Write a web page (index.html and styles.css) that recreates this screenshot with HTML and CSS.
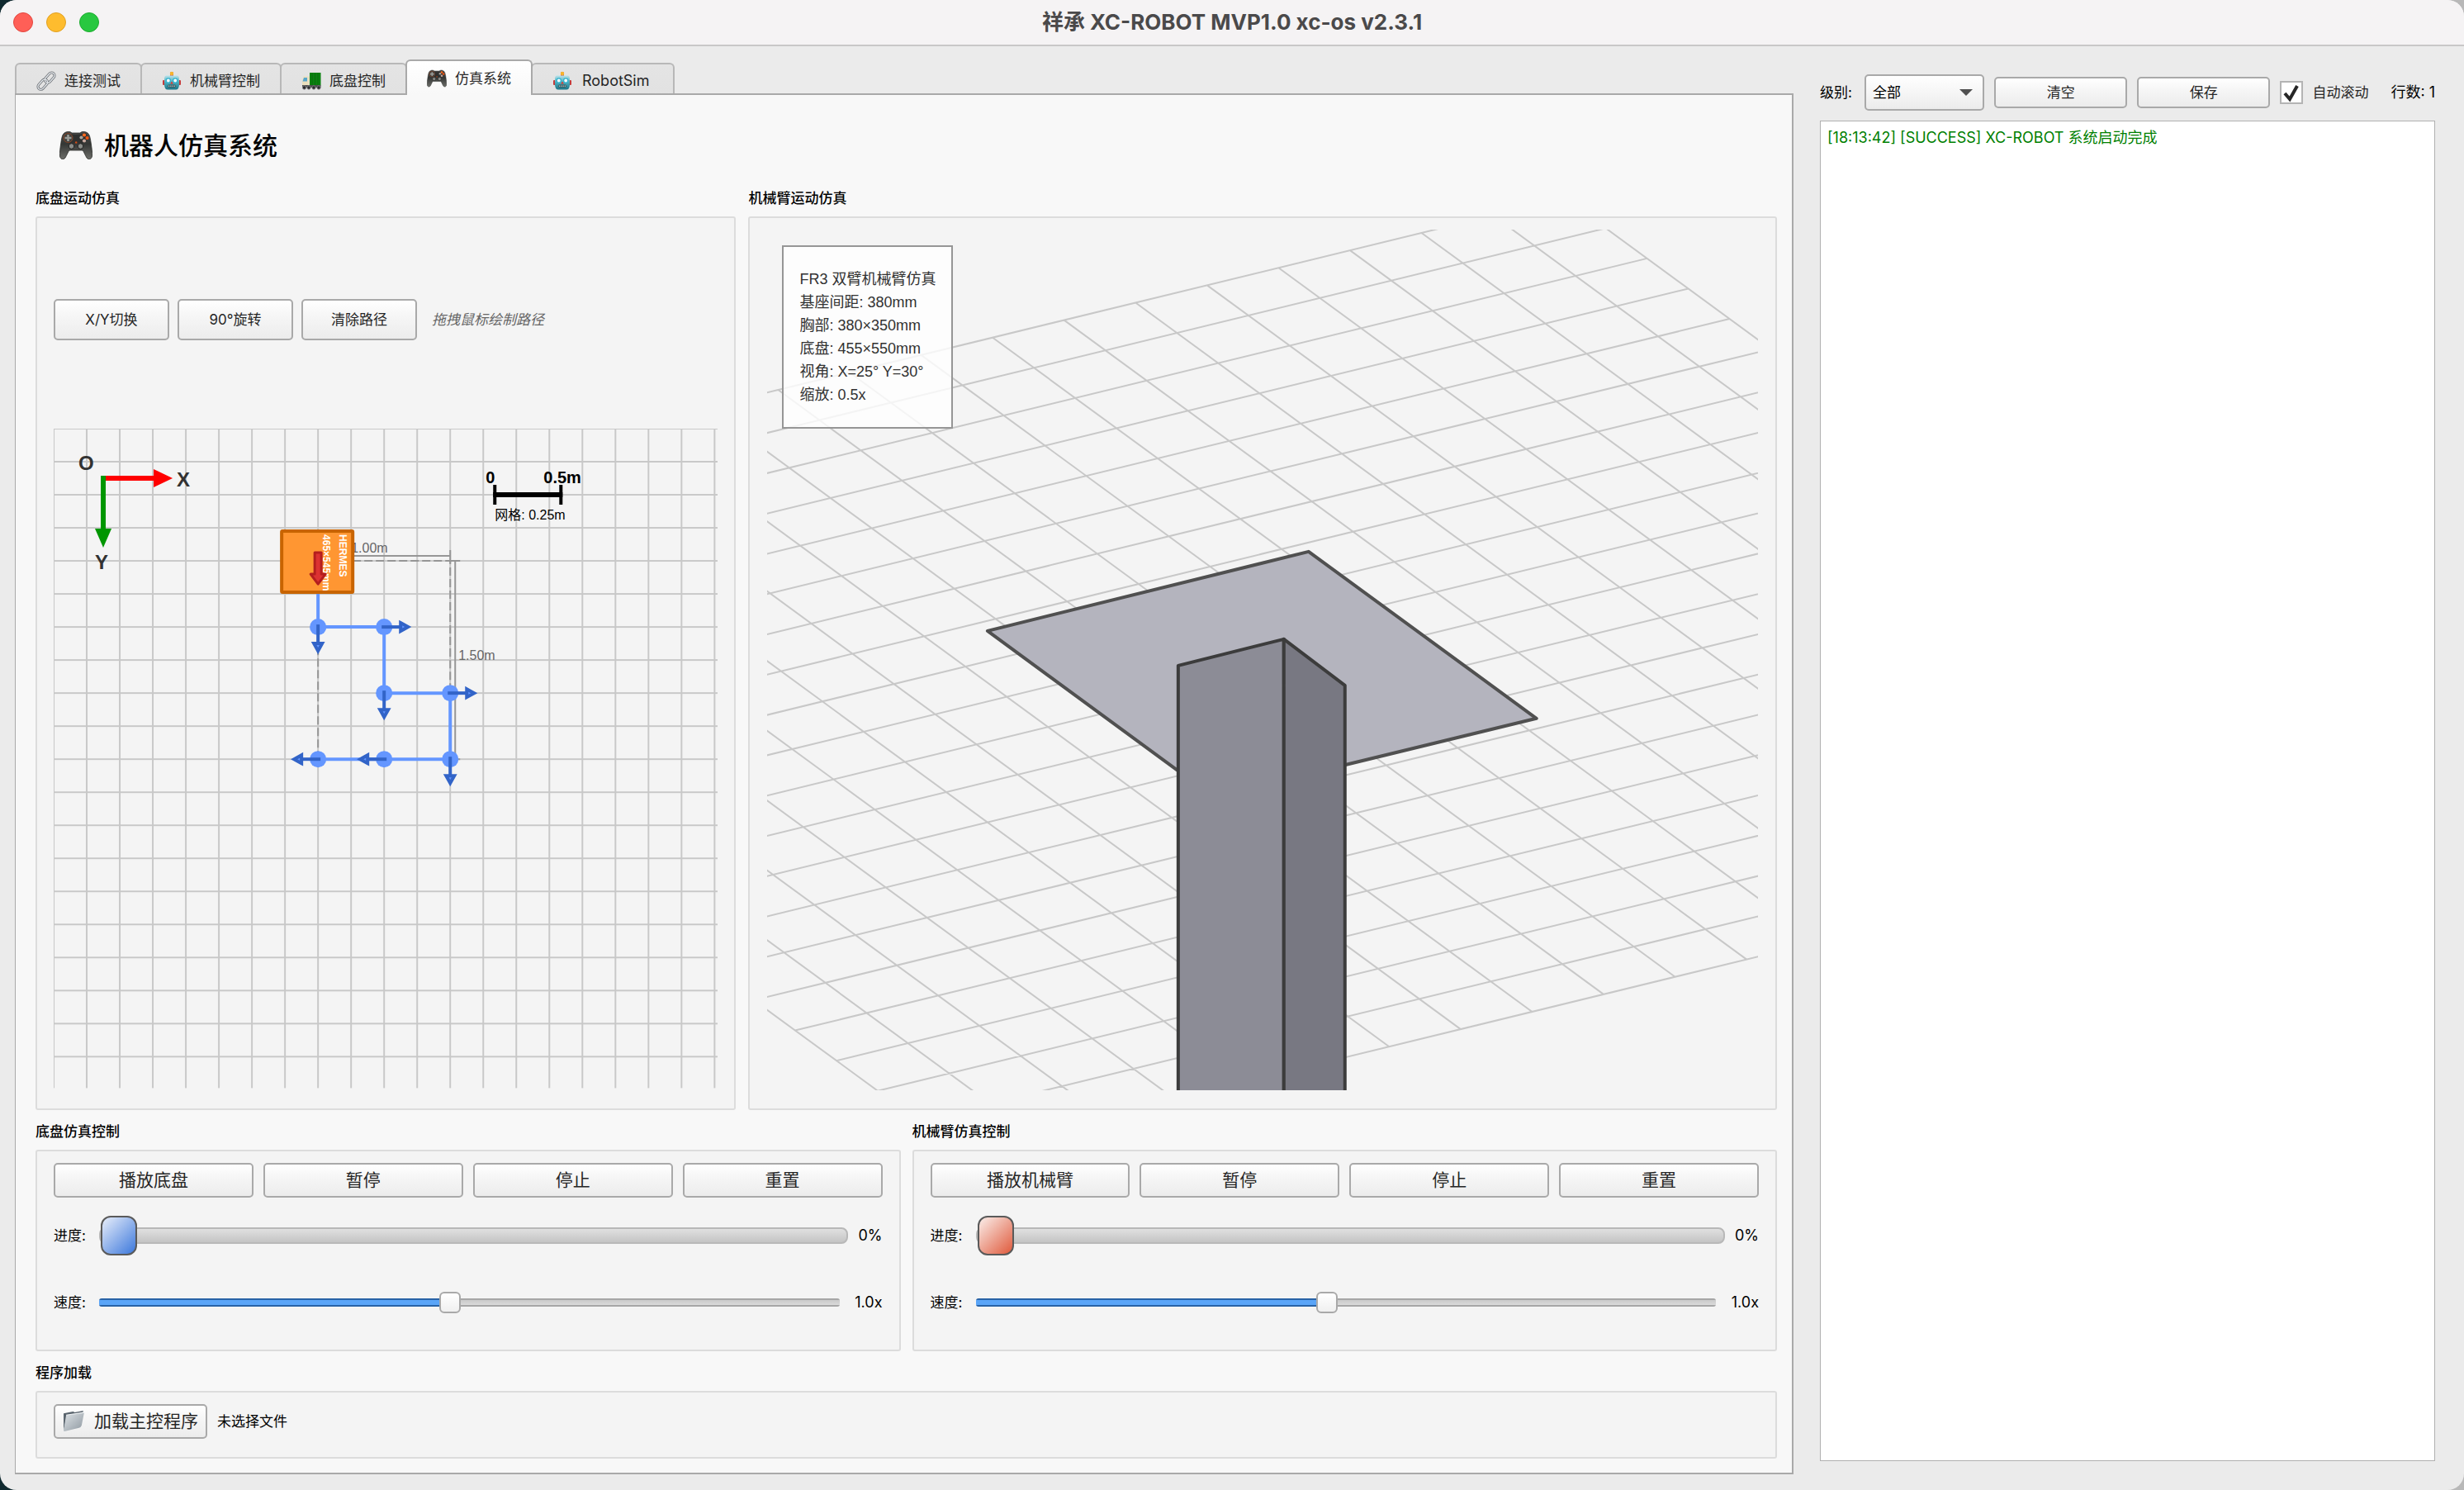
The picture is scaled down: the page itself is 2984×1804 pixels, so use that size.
FILE: index.html
```html
<!DOCTYPE html>
<html lang="zh-CN">
<head>
<meta charset="utf-8">
<title>祥承 XC-ROBOT MVP1.0 xc-os v2.3.1</title>
<link rel="stylesheet" href="styles.css">
</head>
<body>
<svg class="defs" aria-hidden="true">
  <defs>
    <linearGradient id="pad-body" x1="0" y1="0" x2="0" y2="1"><stop offset="0" stop-color="#4a4a48"/><stop offset=".45" stop-color="#353735"/><stop offset="1" stop-color="#6d6e6a"/></linearGradient>
    <linearGradient id="bot-face" x1="0" y1="0" x2="0" y2="1"><stop offset="0" stop-color="#b9e2ea"/><stop offset=".45" stop-color="#4fb0c0"/><stop offset="1" stop-color="#1b7486"/></linearGradient>
    <linearGradient id="folder-front" x1="0" y1="0" x2="1" y2="1"><stop offset="0" stop-color="#dfe4e8"/><stop offset="1" stop-color="#8d979f"/></linearGradient>
    <symbol id="icon-gamepad" viewBox="0 0 40 34">
      <path d="M8 1C10 0 13 0 15 2H25C27 0 30 0 32 1C36 2 37 6 38 13C39 20 40 26 39.500 30C39 34 35 35 33 32C31 29 30 25 28 23H12C10 25 9 29 7 32C5 35 1 34 .5 30C0 26 1 20 2 13C3 6 4 2 8 1Z" fill="url(#pad-body)" stroke="#2b2c2a" stroke-width=".8"/>
      <path d="M8 2Q20 6 32 2L35 8Q30 16 25 14H15Q10 16 5 8Z" fill="#2f302f"/>
      <circle cx="10.500" cy="8" r="5.500" fill="#3e403e" stroke="#8a4527" stroke-width="1"/>
      <path d="M10.500 4V12M6.500 8H14.500" stroke="#9a9c98" stroke-width="2.600"/>
      <circle cx="30" cy="4.500" r="2.100" fill="#ff6a1f"/><circle cx="33.500" cy="8" r="2.100" fill="#f2530f"/><circle cx="26.500" cy="7.500" r="2.100" fill="#a9a49d"/><circle cx="30" cy="11.500" r="2.100" fill="#c9aaa0"/>
      <circle cx="20.200" cy="13.500" r="1.200" fill="#d34c17"/>
      <circle cx="14.500" cy="18" r="3.300" fill="#8b8d89" stroke="#222" stroke-width="1"/><circle cx="25.500" cy="18" r="3.300" fill="#8b8d89" stroke="#222" stroke-width="1"/>
    </symbol>
    <symbol id="icon-robot" viewBox="0 0 24 24">
      <rect x="10" y="1.500" width="4" height="5" fill="#c9583f"/><circle cx="12" cy="3" r="2.200" fill="#f7b52c"/>
      <rect x="1" y="11" width="3" height="6" rx="1" fill="#c43c3c"/><rect x="20" y="11" width="3" height="6" rx="1" fill="#c43c3c"/>
      <path d="M5 5.500H19Q21 6 21 9V17Q20.500 22.500 17 22.500H7Q3.500 22.500 3 17V9Q3 6 5 5.500Z" fill="url(#bot-face)"/>
      <circle cx="7.800" cy="11.500" r="2.600" fill="#fff" stroke="#35b4d0" stroke-width="1.400"/><circle cx="16.200" cy="11.500" r="2.600" fill="#fff" stroke="#35b4d0" stroke-width="1.400"/>
      <path d="M12 12.500L13.800 15.500H10.200Z" fill="#e0372c"/>
      <rect x="7.500" y="17" width="9" height="2.600" rx=".6" fill="#a8b4b4" stroke="#23505a" stroke-width=".8"/><path d="M9.700 17V19.500M12 17V19.500M14.300 17V19.500" stroke="#23505a" stroke-width=".8"/>
    </symbol>
    <symbol id="icon-link" viewBox="0 0 24 24">
      <g fill="none">
        <g stroke="#6c7075" stroke-width="3"><rect x="-3.500" y="-7" width="7" height="14" rx="3.500" transform="translate(16.200 8) rotate(42)"/><rect x="-3.500" y="-7" width="7" height="14" rx="3.500" transform="translate(7.800 16.200) rotate(42)"/></g>
        <g stroke="#e2e6ea" stroke-width="1.400"><rect x="-3.500" y="-7" width="7" height="14" rx="3.500" transform="translate(16.200 8) rotate(42)"/><rect x="-3.500" y="-7" width="7" height="14" rx="3.500" transform="translate(7.800 16.200) rotate(42)"/></g>
      </g>
    </symbol>
    <symbol id="icon-truck" viewBox="0 0 24 24">
      <rect x="10" y="2" width="13.500" height="15.500" fill="#0a8210"/><path d="M13 2.500V17M16.500 2.500V17M20 2.500V17" stroke="#0b650f" stroke-width=".8"/>
      <path d="M2.500 6.500H9.500V18H1V12.500Z" fill="#eadfbd"/><path d="M3 8H7V12.500H1.500Z" fill="#58a6cc"/>
      <rect x="1" y="17" width="22.500" height="3" fill="#4c4d4f"/>
      <g fill="#2c2d2f" stroke="#8b8c8f" stroke-width=".8"><circle cx="3.500" cy="20" r="2.200"/><circle cx="9" cy="20" r="2.200"/><circle cx="15" cy="20" r="2.200"/><circle cx="21" cy="20" r="2.200"/></g>
    </symbol>
    <symbol id="icon-folder" viewBox="0 0 26 26">
      <path d="M1 4L12 2L14 3L24 1L22 7L4 10L1 24Z" fill="#59646d"/>
      <path d="M4 6L25 3L22 18Q21 20.500 19 21L2 25Q1 25 1 24Z" fill="url(#folder-front)"/>
      <path d="M4 6L25 3" stroke="#edf0f2" stroke-width="1"/>
    </symbol>
  </defs>
</svg>

<div class="window">
  <header class="titlebar">
    <div class="lights"><span class="light close"></span><span class="light minimize"></span><span class="light zoom"></span></div>
    <div class="window-title">祥承 XC-ROBOT MVP1.0 xc-os v2.3.1</div>
  </header>

  <div class="workspace">
    <main class="main">
      <div class="tabs" role="tablist">
        <button class="tab" role="tab"><svg class="tab-icon"><use href="#icon-link"/></svg>连接测试</button>
        <button class="tab" role="tab"><svg class="tab-icon"><use href="#icon-robot"/></svg>机械臂控制</button>
        <button class="tab" role="tab"><svg class="tab-icon"><use href="#icon-truck"/></svg>底盘控制</button>
        <button class="tab tab-active" role="tab" aria-selected="true"><svg class="tab-icon"><use href="#icon-gamepad"/></svg>仿真系统</button>
        <button class="tab" role="tab"><svg class="tab-icon"><use href="#icon-robot"/></svg><span class="latin">RobotSim</span></button>
      </div>

      <div class="page" role="tabpanel">
        <h1 class="page-title"><svg class="title-icon"><use href="#icon-gamepad"/></svg>机器人仿真系统</h1>

        <div class="views">
          <section class="group">
            <h2 class="group-title">底盘运动仿真</h2>
            <div class="box view-box">
              <div class="path-tools">
                <button class="button path-button">X/Y切换</button>
                <button class="button path-button">90°旋转</button>
                <button class="button path-button">清除路径</button>
                <span class="hint">拖拽鼠标绘制路径</span>
              </div>
              <svg class="canvas" viewBox="0 0 804 800">
                <defs>
                  <pattern id="floor" width="40" height="40" patternUnits="userSpaceOnUse"><path d="M0 0H40V40H0Z" fill="none" stroke="#c8c8c8" stroke-width="2"/></pattern>
                  <g id="waypoint"><circle r="10" fill="#6496ff"/><path d="M-3 0H22" stroke="#3264c8" stroke-width="4"/><path d="M20-5L29 0L20 5Z" fill="#6496ff" stroke="#3264c8" stroke-width="4"/></g>
                </defs>
                <rect width="804" height="798" fill="url(#floor)"/>
                <g fill="none" stroke="#969696" stroke-width="2">
                  <path d="M320 160H480V400H320Z" stroke-dasharray="10 4"/>
                  <path d="M320 154H480M480 147V162M486 160V400M480 160H492M480 400H492"/>
                </g>
                <g class="measure"><text x="360" y="150">1.00m</text><text x="490" y="280">1.50m</text></g>
                <path d="M60 60H124" stroke="#f00" stroke-width="6"/><path d="M121 49L144 60L121 71Z" fill="#f00"/>
                <path d="M60 57V124" stroke="#009600" stroke-width="6"/><path d="M50 121L60 144L70 121Z" fill="#009600"/>
                <g class="axis"><text x="30" y="50">O</text><text x="149" y="70">X</text><text x="50" y="170">Y</text></g>
                <path d="M532 80H616" stroke="#000" stroke-width="6"/><path d="M534 68V92M614 68V92" stroke="#000" stroke-width="4"/>
                <g class="scale"><text x="523" y="66">0</text><text x="593" y="66">0.5m</text></g>
                <text class="scale-note" x="534" y="110">网格: 0.25m</text>
                <path d="M320 160V240H400V320H480V400H320" fill="none" stroke="#6496ff" stroke-width="4"/>
                <use href="#waypoint" transform="translate(320 240) rotate(90)"/>
                <use href="#waypoint" transform="translate(400 240)"/>
                <use href="#waypoint" transform="translate(400 320) rotate(90)"/>
                <use href="#waypoint" transform="translate(480 320)"/>
                <use href="#waypoint" transform="translate(480 400) rotate(90)"/>
                <use href="#waypoint" transform="translate(400 400) rotate(180)"/>
                <use href="#waypoint" transform="translate(320 400) rotate(180)"/>
                <rect x="276" y="124" width="86" height="74" rx="1" fill="#ff9632" stroke="#c86400" stroke-width="4"/>
                <g class="robot-text"><text transform="translate(346 128) rotate(90)">HERMES</text><text transform="translate(326 128) rotate(90)">465×545mm</text></g>
                <path d="M316 150H324V176H329L320 188L311 176H316Z" fill="#dc3232" stroke="#b41e1e" stroke-width="3" stroke-linejoin="round"/>
              </svg>
            </div>
          </section>

          <section class="group">
            <h2 class="group-title">机械臂运动仿真</h2>
            <div class="box view-box scene-box">
              <div class="scene">
                <svg class="canvas" viewBox="0 0 1200 1042">
                  <g transform="matrix(86.6 -21.13 50 36.6 600 539)">
                    <path class="ground" d="M-10-10H10M-10-9H10M-10-8H10M-10-7H10M-10-6H10M-10-5H10M-10-4H10M-10-3H10M-10-2H10M-10-1H10M-10 0H10M-10 1H10M-10 2H10M-10 3H10M-10 4H10M-10 5H10M-10 6H10M-10 7H10M-10 8H10M-10 9H10M-10 10H10M-10-10V10M-9-10V10M-8-10V10M-7-10V10M-6-10V10M-5-10V10M-4-10V10M-3-10V10M-2-10V10M-1-10V10M0-10V10M1-10V10M2-10V10M3-10V10M4-10V10M5-10V10M6-10V10M7-10V10M8-10V10M9-10V10M10-10V10"/>
                  </g>
                  <path d="M267 486L656 390L932 592L541 687Z" fill="#b4b4be" stroke="#505050" stroke-width="4" stroke-linejoin="round"/>
                  <g stroke="#3c3c3c" stroke-width="4" stroke-linejoin="round">
                    <path d="M498 528L626 496V1060H498Z" fill="#8c8c96"/>
                    <path d="M626 496L700 552V1060H626Z" fill="#787882"/>
                  </g>
                </svg>
                <div class="info">
                  <div>FR3 双臂机械臂仿真</div>
                  <div>基座间距: 380mm</div>
                  <div>胸部: 380×350mm</div>
                  <div>底盘: 455×550mm</div>
                  <div>视角: X=25° Y=30°</div>
                  <div>缩放: 0.5x</div>
                </div>
              </div>
            </div>
          </section>
        </div>

        <div class="controls">
          <section class="group">
            <h2 class="group-title">底盘仿真控制</h2>
            <div class="box control-box">
              <div class="button-row">
                <button class="button">播放底盘</button><button class="button">暂停</button><button class="button">停止</button><button class="button">重置</button>
              </div>
              <div class="slider-row progress-row">
                <label for="base-progress">进度:</label>
                <input class="progress progress-blue" id="base-progress" type="range" min="0" max="100" value="0">
                <output for="base-progress">0%</output>
              </div>
              <div class="slider-row speed-row">
                <label for="base-speed">速度:</label>
                <input class="speed" id="base-speed" type="range" min="0.1" max="2" step="0.1" value="1">
                <output for="base-speed">1.0x</output>
              </div>
            </div>
          </section>
          <section class="group">
            <h2 class="group-title">机械臂仿真控制</h2>
            <div class="box control-box">
              <div class="button-row">
                <button class="button">播放机械臂</button><button class="button">暂停</button><button class="button">停止</button><button class="button">重置</button>
              </div>
              <div class="slider-row progress-row">
                <label for="arm-progress">进度:</label>
                <input class="progress progress-red" id="arm-progress" type="range" min="0" max="100" value="0">
                <output for="arm-progress">0%</output>
              </div>
              <div class="slider-row speed-row">
                <label for="arm-speed">速度:</label>
                <input class="speed" id="arm-speed" type="range" min="0.1" max="2" step="0.1" value="1">
                <output for="arm-speed">1.0x</output>
              </div>
            </div>
          </section>
        </div>

        <section class="group">
          <h2 class="group-title">程序加载</h2>
          <div class="box load-box">
            <button class="button load-button"><svg class="folder-icon"><use href="#icon-folder"/></svg>加载主控程序</button>
            <span>未选择文件</span>
          </div>
        </section>
      </div>
    </main>

    <aside class="log">
      <div class="log-tools">
        <label for="level">级别:</label>
        <span class="select-wrap"><select class="select" id="level"><option>全部</option></select></span>
        <button class="button log-button">清空</button>
        <button class="button log-button">保存</button>
        <label class="check">
          <span class="check-box"><input class="check-input" type="checkbox" checked><svg class="check-mark" viewBox="0 0 28 28"><path d="M6 15L12 22L21 6" fill="none" stroke="#262626" stroke-width="4"/></svg></span>
          自动滚动
        </label>
        <span class="line-count">行数: 1</span>
      </div>
      <div class="log-view" role="log"><p class="log-line">[18:13:42] [SUCCESS] XC-ROBOT 系统启动完成</p></div>
    </aside>
  </div>
</div>
</body>
</html>
```
FILE: styles.css
```css
* { box-sizing: border-box; }

body {
  margin: 0;
  background: linear-gradient(90deg, #10292f 50%, #b8b8b8 50%);
  font: 17px/24px Inter, "Noto Sans CJK SC", sans-serif;
  color: #000;
}

button, input, select { font: inherit; color: inherit; margin: 0; }
h1, h2, p { margin: 0; }
.defs { position: absolute; width: 0; height: 0; }

.window {
  display: flex;
  flex-direction: column;
  min-height: 100vh;
  border-radius: 20px;
  background: #ebebeb;
  overflow: hidden;
}

/* Title bar */
.titlebar {
  display: grid;
  grid-template-columns: 1fr auto 1fr;
  align-items: center;
  height: 56px;
  padding: 0 16px;
  background: #f5f3f4;
  border-bottom: 2px solid #c8c7c7;
}
.lights { display: flex; gap: 16px; }
.light { width: 24px; height: 24px; border-radius: 50%; border: 1px solid; }
.close { background: #ff5f57; border-color: #e2463f; }
.minimize { background: #febc2e; border-color: #e0a023; }
.zoom { background: #28c840; border-color: #1dab2f; }
.window-title { font-size: 26px; font-weight: 700; line-height: 32px; color: #4a494a; }

.workspace {
  flex: 1;
  display: grid;
  grid-template-columns: minmax(0, 2154fr) minmax(0, 745fr);
  gap: 32px;
  padding: 16px 35px 19px 18px;
}
.main { display: flex; flex-direction: column; }

/* Tabs */
.tabs { display: flex; align-items: flex-end; margin-bottom: -2px; }
.tab {
  display: flex;
  align-items: center;
  gap: 10px;
  height: 39px;
  margin-right: -2px;
  padding: 5px 24px 0;
  border: 2px solid #b8b8b8;
  border-bottom-color: #a9a9a9;
  border-radius: 6px 6px 0 0;
  background: linear-gradient(#e4e4e4, #e2e2e2);
  color: #262626;
  white-space: nowrap;
}
.tab-active {
  position: relative;
  height: 43px;
  padding-top: 0;
  border-color: #a9a9a9;
  border-bottom: 0;
  background: linear-gradient(#fff, #f8f8f8);
}
.tab-icon { width: 24px; height: 24px; }
.latin { font-size: 18px; padding: 0 4px 0 2px; }

.page {
  flex: 1;
  display: flex;
  flex-direction: column;
  gap: 14px;
  padding: 41px 18px 17px 24px;
  border: 1px solid #a9a9a9;
  border-width: 2px 2px 2px 1px;
  background: #f8f8f8;
}
.page-title {
  display: flex;
  align-items: center;
  gap: 14px;
  margin-bottom: 18px;
  padding-left: 29px;
  font-size: 30px;
  font-weight: 500;
  line-height: 40px;
}
.title-icon { width: 40px; height: 34px; }

/* Titled groups */
.group { display: flex; flex-direction: column; }
.group-title { margin-bottom: 10px; font-size: 17px; font-weight: 500; line-height: 24px; }
.box {
  flex: 1;
  padding: 14px 20px 22px;
  border: 2px solid #dcdcdc;
  border-radius: 3px;
  background: #f4f4f4;
}

.button {
  display: flex;
  align-items: center;
  justify-content: center;
  height: 42px;
  padding: 0;
  border: 2px solid #a9a9a9;
  border-radius: 5px;
  background: linear-gradient(#fff, #f6f6f6 40%, #ececec);
  color: #262626;
  font-size: 21px;
  white-space: nowrap;
}

/* Simulation views */
.views { display: grid; grid-template-columns: minmax(0, 848fr) minmax(0, 1245fr); gap: 15px; }
.view-box { display: flex; flex-direction: column; }
.scene-box { padding: 14px 21px 22px; }
.canvas { display: block; width: 100%; height: auto; }
.path-tools { flex: 1; display: flex; align-items: center; gap: 10px; padding-bottom: 24px; }
.path-button { width: 140px; height: 50px; font-size: 17px; }
.hint { margin-left: 8px; font-style: italic; color: #666; }

.measure, .axis, .scale, .scale-note, .info { font-family: "Liberation Sans", "Noto Sans CJK SC", sans-serif; }
.measure { font-size: 16px; fill: #666; }
.axis { font-size: 24px; font-weight: 700; fill: #323232; }
.scale { font-size: 20px; font-weight: 700; }
.scale-note { font-size: 16px; }
.robot-text { font: 700 12px "Liberation Sans", sans-serif; fill: #fff; }
.ground { fill: none; stroke: #c8c8c8; stroke-width: 2px; vector-effect: non-scaling-stroke; }

.scene { position: relative; }
.info {
  position: absolute;
  top: 19px;
  left: 18px;
  padding: 25px 19px;
  border: 2px solid #969696;
  background: rgba(255, 255, 255, .8);
  font-size: 18px;
  line-height: 28px;
  color: #323232;
}

/* Playback controls */
.controls { display: grid; grid-template-columns: 1fr 1fr; gap: 14px; }
.control-box { padding-bottom: 44px; }
.button-row { display: grid; grid-template-columns: repeat(4, 1fr); gap: 12px; }
.slider-row { display: flex; align-items: center; gap: 12px; }
.slider-row label { width: 43px; }
.slider-row output { font-size: 18px; text-align: right; }
.progress-row { height: 48px; margin-top: 22px; }
.speed-row { height: 26px; margin-top: 44px; }
.speed-row output { width: 40px; }

.progress, .speed { flex: 1; min-width: 0; appearance: none; background: none; }
.progress { height: 48px; }
.progress::-webkit-slider-runnable-track {
  height: 20px;
  border: 2px solid #b8b8b8;
  border-radius: 8px;
  background: linear-gradient(#e0e0e0, #c4c4c4);
}
.progress::-webkit-slider-thumb {
  appearance: none;
  width: 44px;
  height: 48px;
  margin-top: -16px;
  border: 2px solid #5a5a5a;
  border-radius: 12px;
}
.progress-blue::-webkit-slider-thumb { background: linear-gradient(135deg, #e8eefa, #3c78dc); }
.progress-red::-webkit-slider-thumb { background: linear-gradient(135deg, #faeeea, #e05a3c); }

.speed { height: 26px; }
.speed::-webkit-slider-runnable-track {
  height: 10px;
  border-radius: 3px;
  background:
    linear-gradient(#2862a6 2px, #5aa5f8 2px, #5aa5f8 8px, #2862a6 8px) 0 0 / 48% 100% no-repeat,
    linear-gradient(#a6a6a6 2px, #cacaca 2px, #dadada 8px, #a6a6a6 8px);
}
.speed::-webkit-slider-thumb {
  appearance: none;
  width: 26px;
  height: 26px;
  margin-top: -8px;
  border: 2px solid #a9a9a9;
  border-radius: 6px;
  background: linear-gradient(#fff, #f0f0f0);
}

.load-box { display: flex; align-items: flex-start; gap: 12px; line-height: 42px; }
.load-button { gap: 11px; width: 186px; }
.folder-icon { width: 27px; height: 27px; }

/* Log panel */
.log { display: flex; flex-direction: column; gap: 12px; padding: 18px 0 16px; }
.log-tools { display: flex; align-items: center; gap: 12px; white-space: nowrap; }
.select-wrap { position: relative; flex: 148; margin-left: 3px; }
.select-wrap::after {
  content: "";
  position: absolute;
  top: 18px;
  right: 14px;
  border: 8px solid transparent;
  border-top-color: #505050;
  border-bottom: 0;
  pointer-events: none;
}
.select {
  display: block;
  width: 100%;
  height: 44px;
  padding: 0 8px;
  border: 2px solid #a9a9a9;
  border-radius: 5px;
  background: linear-gradient(#fff, #ececec);
  appearance: none;
}
.log-button { flex: 160; height: 38px; font-size: 17px; }
.check { display: flex; align-items: center; gap: 11px; color: #262626; }
.check-box { position: relative; width: 28px; height: 28px; }
.check-input { display: block; width: 28px; height: 28px; appearance: none; border: 2px solid #b4b4b4; background: #fff; }
.check-mark { position: absolute; inset: 0; pointer-events: none; }
.line-count { margin-left: 15px; font-size: 18px; }
.log-view { flex: 1; padding: 8px; border: 1px solid #b0b0b0; background: #fff; }
.log-line { font-size: 18px; color: #008000; }
```
